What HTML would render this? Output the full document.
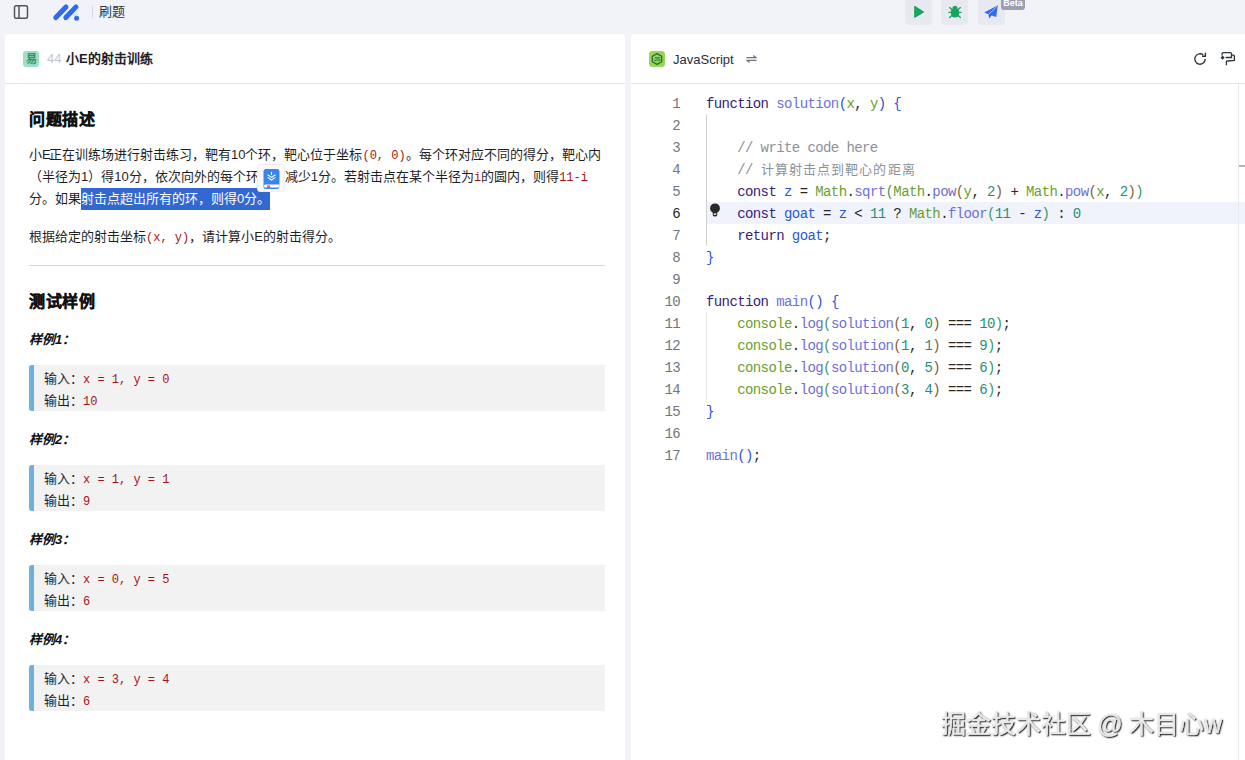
<!DOCTYPE html>
<html lang="zh-CN">
<head>
<meta charset="utf-8">
<title>刷题</title>
<style>
*{box-sizing:border-box;margin:0;padding:0}
html,body{width:1245px;height:760px;overflow:hidden}
body{background:#f2f3f8;font-family:"Liberation Sans",sans-serif;color:#1d2129;position:relative;font-size:13px}
.abs{position:absolute}
/* top bar */
#topbar{position:absolute;left:0;top:0;width:1245px;height:34px}
.tbtn{position:absolute;top:-2px;height:27.3px;width:27px;background:#e8e9f0;border-radius:4px}
#beta{position:absolute;left:1001px;top:-6px;width:24px;height:15.6px;background:#9c9fb3;border-radius:3px;color:#fff;font-size:9px;font-weight:bold;line-height:12px;padding-top:2.6px;text-align:center;overflow:hidden}
/* panels */
#left{position:absolute;left:5px;top:34px;width:620px;height:740px;background:#fff;border-radius:4px 4px 0 0}
#right{position:absolute;left:631px;top:34px;width:620px;height:740px;background:#fff;border-radius:4px 0 0 0}
.phead{position:absolute;left:0;top:0;right:0;height:50px;border-bottom:1px solid #e5e6eb}
/* left content */
#tag{position:absolute;left:18px;top:17px;width:16px;height:16px;border-radius:3px;background:#9ddfc5;color:#2a8a60;-webkit-text-stroke:0.3px #2a8a60;font-size:11px;line-height:16px;text-align:center}
#num{position:absolute;left:42px;top:17px;line-height:16px;font-size:13px;color:#c3c6cc}
#title{position:absolute;left:61px;top:17px;line-height:16px;font-size:13px;font-weight:bold;color:#1d2129;white-space:nowrap}
h2{position:absolute;left:24px;font-size:16px;letter-spacing:0.7px;-webkit-text-stroke:0.3px #111;line-height:22px;font-weight:bold;color:#111;white-space:nowrap}
.p{position:absolute;left:24px;font-size:13px;line-height:22px;color:#1f1f1f;white-space:nowrap}
.c{font-family:"Liberation Mono",monospace;font-size:12px;line-height:1;color:#a31515}
.sel{color:#fff}
#selbg{position:absolute;left:76px;top:154px;width:189px;height:22px;background:#3367d1}
.lab{position:absolute;left:24px;font-size:13px;line-height:22px;font-weight:bold;font-style:italic;color:#111;white-space:nowrap}
.bq{position:absolute;left:24px;width:576px;height:46px;background:#f2f2f2;border-left:5px solid #6eb0da;border-radius:3px 0 0 3px;padding:3px 0 0 10px;font-size:13px;line-height:22px;color:#1f1f1f;white-space:nowrap}
#hr{position:absolute;left:24px;top:231px;width:576px;height:1px;background:#d9d9d9}
/* editor */
#code{position:absolute;left:0;top:58px;width:620px;font-family:"Liberation Mono",monospace;font-size:13px;line-height:22px;color:#24292e}
.ln{font-size:14px;letter-spacing:-0.6px;margin-top:1px;position:absolute;left:0;width:49px;text-align:right;color:#6e7781;height:22px}
.cl{margin-top:1px;position:absolute;left:75px;height:22px;white-space:pre;font-size:14px;letter-spacing:-0.6px}
.k{color:#33247a}.f{color:#6f6fd8}.g{color:#6a9e2e}.n{color:#1f8f7a}.v{color:#2a5bd0}.cm{color:#8c9199}
.b1{color:#2f54d0}.b2{color:#3a9a5c}.b3{color:#87602f}
#curline{position:absolute;left:75px;top:110px;width:545px;height:22px;background:#f0f3fc}
.guide{position:absolute;width:1px}
.ln.cur{color:#1f1f1f}
.cj{letter-spacing:1.1px;font-size:13px}
#vrule{position:absolute;left:607px;top:50px;width:1px;height:700px;background:#e9e9ec;z-index:3}
#ovmark{position:absolute;left:608px;top:131px;width:8px;height:2px;background:#b4b4b8}
#wm{will-change:transform;position:absolute;left:941px;top:709px;font-size:25px;line-height:30px;color:#e9e9e9;-webkit-text-stroke:0.5px #e9e9e9;text-shadow:1px 1px 1px #262626,1px 1px 2px #555;white-space:nowrap;letter-spacing:-0.1px}
</style>
</head>
<body>
<div id="topbar">
  <!-- sidebar icon -->
  <svg class="abs" style="left:13px;top:4px" width="16" height="16" viewBox="0 0 16 16" fill="none" stroke="#4e5561" stroke-width="1.5"><rect x="1.5" y="1.75" width="13" height="12.5" rx="1.5"/><line x1="6" y1="2" x2="6" y2="14"/></svg>
  <!-- logo -->
  <svg class="abs" style="left:52px;top:3px" width="29" height="19" viewBox="0 0 29 19"><g stroke="#2f6bf2" stroke-width="5" stroke-linecap="round"><line x1="3.8" y1="14.6" x2="14" y2="4"/><line x1="13.8" y1="14.6" x2="24" y2="4"/></g><path d="M25.6 5.5 L25.6 13 L19.5 13 Z" fill="#dde7fc"/><circle cx="24.6" cy="15.2" r="2.5" fill="#2f6bf2"/></svg>
  <div class="abs" style="left:92px;top:6px;width:1px;height:12px;background:#d5d7de"></div>
  <div class="abs" style="left:99px;top:4px;font-size:13px;line-height:16px;color:#30343b">刷题</div>
  <!-- buttons -->
  <div class="tbtn" style="left:905px"><svg class="abs" style="left:8px;top:7px" width="12" height="14" viewBox="0 0 12 14"><path d="M1.8 1.6 L10.4 6.9 L1.8 12.2 Z" fill="#17a65b" stroke="#17a65b" stroke-width="1.2" stroke-linejoin="round"/></svg></div>
  <div class="tbtn" style="left:941px"><svg class="abs" style="left:7px;top:7px" width="14" height="14" viewBox="0 0 14 14"><g stroke="#17a65b" stroke-width="1.3" stroke-linecap="round"><line x1="1.6" y1="2.6" x2="4.4" y2="5"/><line x1="12.4" y1="2.6" x2="9.6" y2="5"/><line x1="1" y1="7.4" x2="13" y2="7.4"/><line x1="1.6" y1="12.6" x2="4.4" y2="10"/><line x1="12.4" y1="12.6" x2="9.6" y2="10"/></g><ellipse cx="7" cy="7.6" rx="4.2" ry="5" fill="#17a65b"/><path d="M4.4 2.8 A2.7 2.7 0 0 1 9.6 2.8 L9.6 3.6 L4.4 3.6 Z" fill="#17a65b"/></svg></div>
  <div class="tbtn" style="left:978px"><svg class="abs" style="left:5px;top:6px" width="16" height="16" viewBox="0 0 16 16"><path d="M14.9 1.2 L1.2 8.4 L5.4 10.3 L6.2 14.4 L8.6 11.6 L13.2 12.9 Z" fill="#2f6bf2"/><path d="M5.6 10.4 L14 2.4" stroke="#dfe6fb" stroke-width="0.7"/></svg></div>
  <div id="beta">Beta</div>
</div>

<div id="left">
  <div class="phead">
    <div id="tag">易</div>
    <div id="num">44</div>
    <div id="title">小E的射击训练</div>
  </div>
  <h2 style="top:75px">问题描述</h2>
  <div class="p" style="top:110px">小<span style="letter-spacing:-1.7px">E</span>正在训练场进行射击练习，靶有10个环，靶心位于坐标<span class="c">(0, 0)</span>。每个环对应不同的得分，靶心内</div>
  <div class="p" style="top:132px">（半径为1）得10分，依次向外的每个环<span style="display:inline-block;width:26px"></span>减少1分。若射击点在某个半径为<span class="c">i</span>的圆内，则得<span class="c">11-i</span></div>
  <div id="selbg"></div>
  <div class="p" style="top:154px">分。如果<span class="sel">射击点超出所有的环，则得0分。</span></div>
  <div class="p" style="top:192px">根据给定的射击坐标<span class="c">(x, y)</span>，请计算小E的射击得分。</div>
  <div id="hr"></div>
  <!-- popup -->
  <div class="abs" style="left:252px;top:130px;width:28px;height:28px;background:#fafafa;border:1px solid #eeeeef;border-radius:3px">
    <svg class="abs" style="left:4.5px;top:4px" width="17" height="21" viewBox="0 0 17 21"><rect x="0.5" y="0" width="16" height="20" rx="2.5" fill="#3b85ea"/><path d="M2.4 15.4 H16.5 V18.4 H2.4 A1.5 1.5 0 0 1 2.4 15.4Z" fill="#fff"/><rect x="4.2" y="16.4" width="2.8" height="2.8" fill="#f0506e"/><path d="M4.6 5.8 L8.5 8.4 L12.4 5.8 M4.6 8.4 L8.5 11 L12.4 8.4" stroke="#fff" stroke-width="1.1" fill="none"/><line x1="8.5" y1="3" x2="8.5" y2="6" stroke="#fff" stroke-width="1.1"/></svg>
  </div>
  <h2 style="top:257px">测试样例</h2>
  <div class="lab" style="top:294.5px">样例1：</div>
  <div class="bq" style="top:331px">输入：<span class="c">x = 1, y = 0</span><br>输出：<span class="c">10</span></div>
  <div class="lab" style="top:394.5px">样例2：</div>
  <div class="bq" style="top:431px">输入：<span class="c">x = 1, y = 1</span><br>输出：<span class="c">9</span></div>
  <div class="lab" style="top:494.5px">样例3：</div>
  <div class="bq" style="top:531px">输入：<span class="c">x = 0, y = 5</span><br>输出：<span class="c">6</span></div>
  <div class="lab" style="top:594.5px">样例4：</div>
  <div class="bq" style="top:631px">输入：<span class="c">x = 3, y = 4</span><br>输出：<span class="c">6</span></div>
</div>

<div id="right">
  <div class="phead">
    <svg class="abs" style="left:18px;top:17px" width="16" height="16" viewBox="0 0 16 16"><rect width="16" height="16" rx="3.5" fill="#97d45c"/><path d="M8 2.6 L12.7 5.3 V10.7 L8 13.4 L3.3 10.7 V5.3 Z" fill="none" stroke="#2c6e2a" stroke-width="1.3" stroke-linejoin="round"/><text x="8" y="10.2" font-family="Liberation Sans" font-size="5.5" font-weight="bold" fill="#2c6e2a" text-anchor="middle">JS</text></svg>
    <div class="abs" style="left:42px;top:17px;font-size:13px;line-height:18px;color:#272e3b">JavaScript</div>
    <svg class="abs" style="left:115px;top:21px" width="11" height="8" viewBox="0 0 11 8" fill="none" stroke="#6b7380" stroke-width="1.3"><path d="M0.5 2.6 H9.8 L7.4 0.5"/><path d="M10.5 5.4 H1.2 L3.6 7.5"/></svg>
    <svg class="abs" style="left:562px;top:18px" width="14" height="14" viewBox="0 0 14 14" fill="none" stroke="#30343b" stroke-width="1.4"><path d="M12.2 7 A5.2 5.2 0 1 1 10.2 2.9"/><path d="M12.4 0.8 V4.2 H9" stroke-linejoin="miter"/></svg>
    <svg class="abs" style="left:589px;top:17px" width="16" height="15" viewBox="0 0 16 15" fill="none" stroke="#30343b" stroke-width="1.3"><path d="M2.1 4.6 V2.7 Q2.1 1.7 3.1 1.7 H10.5 Q11.5 1.7 11.5 2.7 V6.5 H5.6"/><path d="M11.5 4.1 H13.4 Q14.4 4.1 14.4 5.1 V9.3 L7.4 10 Q6.4 10.1 6.4 11.1 V14.2"/><path d="M2.6 4.6 L4.7 6.7 L2.6 8.8 L0.5 6.7 Z" fill="#30343b" stroke="none"/></svg>
  </div>
  <div id="vrule"></div><div id="ovmark"></div>
  <div id="code">
    <div id="curline"></div>
    <div class="guide" style="left:75px;top:22px;height:132px;background:#d0d0d0"></div>
    <div class="guide" style="left:75px;top:220px;height:88px;background:#e6e6e6"></div>
    <svg class="abs" style="left:78px;top:110.5px" width="12" height="15" viewBox="0 0 11 14"><circle cx="5.5" cy="5" r="4.6" fill="#2a2a2a"/><path d="M3.4 8.5 H7.6 V11.2 Q7.6 12.6 5.5 12.6 Q3.4 12.6 3.4 11.2 Z" fill="#2a2a2a"/><rect x="4.3" y="9.6" width="2.4" height="1.6" fill="#cfd3e6"/></svg>
    <div class="ln" style="top:0px">1</div><div class="cl" style="top:0px"><span class="k">function</span> <span class="f">solution</span><span class="b1">(</span><span class="g">x</span>, <span class="g">y</span><span class="b1">)</span> <span class="b1">{</span></div>
    <div class="ln" style="top:22px">2</div><div class="cl" style="top:22px"></div>
    <div class="ln" style="top:44px">3</div><div class="cl" style="top:44px">    <span class="cm">// write code here</span></div>
    <div class="ln" style="top:66px">4</div><div class="cl" style="top:66px">    <span class="cm">// </span><span class="cm cj">计算射击点到靶心的距离</span></div>
    <div class="ln" style="top:88px">5</div><div class="cl" style="top:88px">    <span class="k">const</span> <span class="v">z</span> = <span class="g">Math</span>.<span class="f">sqrt</span><span class="b2">(</span><span class="g">Math</span>.<span class="f">pow</span><span class="b3">(</span><span class="g">y</span>, <span class="n">2</span><span class="b3">)</span> + <span class="g">Math</span>.<span class="f">pow</span><span class="b3">(</span><span class="g">x</span>, <span class="n">2</span><span class="b3">)</span><span class="b2">)</span></div>
    <div class="ln cur" style="top:110px">6</div><div class="cl" style="top:110px">    <span class="k">const</span> <span class="v">goat</span> = <span class="v">z</span> &lt; <span class="n">11</span> ? <span class="g">Math</span>.<span class="f">floor</span><span class="b2">(</span><span class="n">11</span> - <span class="v">z</span><span class="b2">)</span> : <span class="n">0</span></div>
    <div class="ln" style="top:132px">7</div><div class="cl" style="top:132px">    <span class="k">return</span> <span class="v">goat</span>;</div>
    <div class="ln" style="top:154px">8</div><div class="cl" style="top:154px"><span class="b1">}</span></div>
    <div class="ln" style="top:176px">9</div><div class="cl" style="top:176px"></div>
    <div class="ln" style="top:198px">10</div><div class="cl" style="top:198px"><span class="k">function</span> <span class="f">main</span><span class="b1">()</span> <span class="b1">{</span></div>
    <div class="ln" style="top:220px">11</div><div class="cl" style="top:220px">    <span class="g">console</span>.<span class="f">log</span><span class="b2">(</span><span class="f">solution</span><span class="b3">(</span><span class="n">1</span>, <span class="n">0</span><span class="b3">)</span> === <span class="n">10</span><span class="b2">)</span>;</div>
    <div class="ln" style="top:242px">12</div><div class="cl" style="top:242px">    <span class="g">console</span>.<span class="f">log</span><span class="b2">(</span><span class="f">solution</span><span class="b3">(</span><span class="n">1</span>, <span class="n">1</span><span class="b3">)</span> === <span class="n">9</span><span class="b2">)</span>;</div>
    <div class="ln" style="top:264px">13</div><div class="cl" style="top:264px">    <span class="g">console</span>.<span class="f">log</span><span class="b2">(</span><span class="f">solution</span><span class="b3">(</span><span class="n">0</span>, <span class="n">5</span><span class="b3">)</span> === <span class="n">6</span><span class="b2">)</span>;</div>
    <div class="ln" style="top:286px">14</div><div class="cl" style="top:286px">    <span class="g">console</span>.<span class="f">log</span><span class="b2">(</span><span class="f">solution</span><span class="b3">(</span><span class="n">3</span>, <span class="n">4</span><span class="b3">)</span> === <span class="n">6</span><span class="b2">)</span>;</div>
    <div class="ln" style="top:308px">15</div><div class="cl" style="top:308px"><span class="b1">}</span></div>
    <div class="ln" style="top:330px">16</div><div class="cl" style="top:330px"></div>
    <div class="ln" style="top:352px">17</div><div class="cl" style="top:352px"><span class="f">main</span><span class="b1">()</span>;</div>
  </div><!--/code-->
</div>

<div id="wm">掘金技术社区 @ 木目心w</div>
</body>
</html>
